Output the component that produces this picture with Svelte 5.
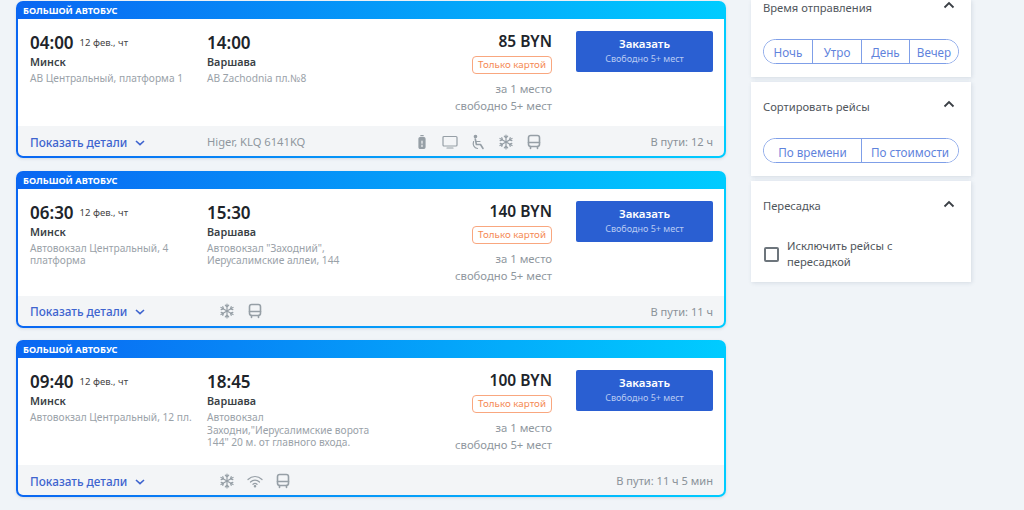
<script>
	const trips = [
		{ dep: '04:00', arr: '14:00', from: 'АВ Центральный, платформа 1', to: 'АВ Zachodnia пл.№8', price: '85 BYN', model: 'Higer, KLQ 6141KQ', icons: ['charge', 'tv', 'seat', 'snow', 'bus'], time: 'В пути: 12 ч' },
		{ dep: '06:30', arr: '15:30', from: 'Автовокзал Центральный, 4 платформа', to: 'Автовокзал "Заходний", Иерусалимские аллеи, 144', price: '140 BYN', model: '', icons: ['snow', 'bus'], time: 'В пути: 11 ч' },
		{ dep: '09:40', arr: '18:45', from: 'Автовокзал Центральный, 12 пл.', to: 'Автовокзал Заходни,"Иерусалимские ворота 144" 20 м. от главного входа.', price: '100 BYN', model: '', icons: ['snow', 'wifi', 'bus'], time: 'В пути: 11 ч 5 мин' }
	];
	const times = ['Ночь', 'Утро', 'День', 'Вечер'];
	const sorts = ['По времени', 'По стоимости'];
	const arms = [0, 60, 120, 180, 240, 300];
</script>

{#snippet chevronUp()}
	<svg class="chev-up" viewBox="0 0 12 8" width="12" height="8"><path d="M1.5 6.5 6 2l4.5 4.5" /></svg>
{/snippet}

{#snippet icon(name)}
	<svg class="ico" viewBox="0 0 16 16" width="16" height="16">
		{#if name === 'charge'}
			<rect class="solid" x="5" y="3.5" width="6" height="11" rx="1.2" />
			<path d="M6.8 1.7h2.4" />
			<path class="cut" d="M8 7v2.2M8 11v1.4" />
		{:else if name === 'tv'}
			<rect x="1" y="2.5" width="14" height="9.5" rx="1" />
			<path d="M5 14h6" />
		{:else if name === 'seat'}
			<circle class="solid" cx="5.5" cy="2.5" r="1.2" />
			<path class="thick" d="M5.3 5 6.4 10.5H10.5L13 14.5" />
			<path d="M6 7.5H10M3.6 7.5C2.5 10.5 4 14 7.5 14.5" />
		{:else if name === 'snow'}
			{#each arms as a}
				<path transform="rotate({a} 8 8)" d="M8 8V1M6.3 2.2 8 4l1.7-1.8" />
			{/each}
		{:else if name === 'wifi'}
			<path d="M1 6.5c4-4 10-4 14 0M3.5 9c2.6-2.5 6.4-2.5 9 0M6 11.3c1.2-1 2.8-1 4 0" />
			<circle class="solid" cx="8" cy="13.3" r=".7" />
		{:else if name === 'bus'}
			<rect class="thick" x="2.5" y="1.5" width="11" height="11" rx="2.2" />
			<path class="thick" d="M2.5 8.5h11M4.5 12.5v2M11.5 12.5v2" />
		{/if}
	</svg>
{/snippet}

<div class="page">
	<main class="list">
		{#each trips as t}
			<article class="card">
				<div class="tag">БОЛЬШОЙ АВТОБУС</div>
				<div class="body">
					<div class="point">
						<div class="time">{t.dep}<span class="date">12 фев., чт</span></div>
						<div class="city">Минск</div>
						<div class="addr">{t.from}</div>
					</div>
					<div class="point">
						<div class="time">{t.arr}</div>
						<div class="city">Варшава</div>
						<div class="addr">{t.to}</div>
					</div>
					<div class="price">
						<div class="sum">{t.price}</div>
						<div class="badge">Только картой</div>
						<div class="note">за 1 место<br />свободно 5+ мест</div>
					</div>
					<button class="order">
						<span class="order-title">Заказать</span>
						<span class="order-sub">Свободно 5+ мест</span>
					</button>
				</div>
				<div class="foot">
					<a class="details" href="#top">Показать детали<svg viewBox="0 0 10 6" width="10" height="6"><path d="M1 1l4 3.6L9 1" /></svg></a>
					<div class="extras">
						{#if t.model}<span class="model">{t.model}</span>{/if}
						<div class="icons">
							{#each t.icons as name}
								{@render icon(name)}
							{/each}
						</div>
					</div>
					<div class="dur">{t.time}</div>
				</div>
			</article>
		{/each}
	</main>

	<aside class="side">
		<section class="box first">
			<div class="box-head"><span>Время отправления</span>{@render chevronUp()}</div>
			<div class="seg four">
				{#each times as label}<button>{label}</button>{/each}
			</div>
		</section>
		<section class="box second">
			<div class="box-head"><span>Сортировать рейсы</span>{@render chevronUp()}</div>
			<div class="seg two">
				{#each sorts as label}<button>{label}</button>{/each}
			</div>
		</section>
		<section class="box last">
			<div class="box-head"><span>Пересадка</span>{@render chevronUp()}</div>
			<label class="check">
				<span class="mark"></span>
				<span>Исключить рейсы с пересадкой</span>
			</label>
		</section>
	</aside>
</div>

<style>
	:global(body) {
		margin: 0;
		background: #f0f4f8;
		font-family: "Noto Sans", "Open Sans", sans-serif;
	}
	.page {
		display: flex;
		align-items: flex-start;
		gap: 25px;
		height: 510px;
		padding-left: 16px;
		overflow: hidden;
		box-sizing: border-box;
	}
	.list {
		width: 710px;
		padding-top: 1px;
		display: flex;
		flex-direction: column;
		gap: 12.5px;
	}
	.card {
		height: 157px;
		box-sizing: border-box;
		padding: 0 2px 2px;
		border-radius: 7px;
		background: linear-gradient(90deg, #0a66f2 0%, #00ccff 100%);
		display: flex;
		flex-direction: column;
		box-shadow: 0 1px 3px rgba(60, 80, 110, 0.15);
	}
	.tag {
		height: 18px;
		line-height: 19px;
		padding-left: 5px;
		font-size: 9.2px;
		font-weight: 700;
		color: #fff;
	}
	.body {
		flex: 1;
		background: #fff;
		display: grid;
		grid-template-columns: 177px 1fr 168px 137px;
		padding: 12px 11px 0 12px;
		min-height: 0;
	}
	.time {
		font-size: 17px;
		font-weight: 600;
		line-height: 23px;
		color: #20242a;
	}
	.date {
		font-size: 9.5px;
		font-weight: 400;
		margin-left: 6px;
		vertical-align: 3px;
		color: #444;
	}
	.city {
		font-size: 10.8px;
		font-weight: 600;
		line-height: 16px;
		color: #3a3f45;
	}
	.addr {
		font-size: 10.2px;
		line-height: 12.5px;
		margin-top: 2px;
		color: #9aa2a9;
		max-width: 170px;
	}
	.price {
		display: flex;
		flex-direction: column;
		align-items: flex-end;
		margin-right: 24px;
	}
	.sum {
		font-size: 15.5px;
		font-weight: 600;
		line-height: 20px;
		color: #20242a;
	}
	.badge {
		margin-top: 5px;
		height: 18px;
		width: 80px;
		box-sizing: border-box;
		border: 1px solid #f9a77f;
		border-radius: 4px;
		font-size: 9.8px;
		line-height: 16px;
		text-align: center;
		color: #f58a55;
	}
	.note {
		margin-top: 6px;
		font-size: 11.3px;
		line-height: 17px;
		text-align: right;
		color: #8f979e;
	}
	.order {
		height: 41px;
		border: 0;
		border-radius: 2px;
		background: #2a5fd2;
		font-family: inherit;
		display: flex;
		flex-direction: column;
		align-items: center;
		padding: 5px 0 0;
	}
	.order-title {
		font-size: 11.5px;
		font-weight: 600;
		line-height: 16px;
		color: #fff;
	}
	.order-sub {
		font-size: 9px;
		line-height: 14px;
		color: #b9cbf2;
	}
	.foot {
		height: 30px;
		flex: none;
		background: #f3f5f7;
		border-radius: 0 0 5px 5px;
		display: grid;
		grid-template-columns: 177px 1fr auto;
		align-items: center;
		padding: 1px 11px 0 12px;
		box-sizing: border-box;
	}
	.details {
		font-size: 11.8px;
		font-weight: 500;
		color: #3e64cf;
		text-decoration: none;
	}
	.details svg {
		margin-left: 8px;
		vertical-align: 1px;
		fill: none;
		stroke: #3e64cf;
		stroke-width: 1.6;
	}
	.extras {
		display: flex;
		align-items: center;
	}
	.model {
		width: 195px;
		font-size: 11.2px;
		color: #8f979e;
	}
	.icons {
		display: flex;
		gap: 12px;
		padding-left: 12px;
	}
	.ico {
		fill: none;
		stroke: #969fa6;
		stroke-width: 1.2;
		stroke-linecap: round;
		stroke-linejoin: round;
	}
	.ico .solid {
		fill: #969fa6;
	}
	.ico .thick {
		stroke-width: 1.6;
	}
	.ico .cut {
		stroke: #f3f5f7;
	}
	.dur {
		font-size: 11.1px;
		color: #8a9299;
	}
	.side {
		width: 220px;
		display: flex;
		flex-direction: column;
		gap: 5px;
	}
	.box {
		background: #fff;
		box-shadow: 1px 1px 4px rgba(90, 110, 140, 0.18);
		padding: 16px 12px 0;
		height: 94px;
		box-sizing: border-box;
	}
	.box.first {
		height: 77px;
		padding-top: 0;
	}
	.box.first .box-head {
		margin-top: -1px;
	}
	.box.last {
		height: 101px;
	}
	.box.last .chev-up {
		margin-top: 3px;
	}
	.box-head {
		display: flex;
		justify-content: space-between;
		height: 18px;
		font-size: 11.2px;
		line-height: 18px;
		color: #50565c;
		padding-right: 4px;
	}
	.chev-up {
		fill: none;
		stroke: #3a3f45;
		stroke-width: 1.8;
		margin-top: 2px;
	}
	.seg {
		display: grid;
		margin-top: 22px;
		height: 25px;
		box-sizing: border-box;
		border: 1px solid #7f9fe8;
		border-radius: 13px;
		overflow: hidden;
		width: 196px;
	}
	.seg.four {
		grid-template-columns: 48px 49px 48px 1fr;
	}
	.seg.two {
		grid-template-columns: 97px 1fr;
	}
	.seg button {
		border: 0;
		border-left: 1px solid #7f9fe8;
		background: #fff;
		padding: 1px 0 0;
		font-family: inherit;
		font-size: 11.7px;
		color: #5f83dc;
	}
	.seg.two button {
		padding-top: 2px;
	}
	.seg button:first-child {
		border-left: 0;
	}
	.check {
		display: flex;
		align-items: center;
		gap: 8px;
		margin-top: 23px;
		font-size: 11.2px;
		line-height: 16px;
		color: #50565c;
		width: 170px;
	}
	.mark {
		flex: none;
		width: 11px;
		height: 11px;
		margin-left: 1px;
		border: 2px solid #6d757c;
		border-radius: 2px;
	}
</style>
